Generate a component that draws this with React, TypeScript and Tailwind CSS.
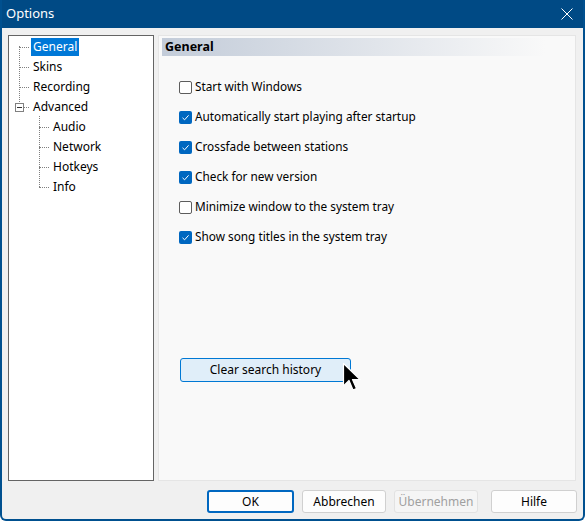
import React from "react";

const font = { fontFamily: '"Noto Sans", "Segoe UI", sans-serif' };

function Check({ checked }: { checked: boolean }) {
  return checked ? (
    <span className="w-[13px] h-[13px] rounded-[2px] bg-[#0067c0] flex items-center justify-center shrink-0">
      <svg width="9" height="9" viewBox="0 0 9 9">
        <path d="M1.5 4.8 L3.6 6.8 L7.6 2.3" fill="none" stroke="white" strokeWidth="1" />
      </svg>
    </span>
  ) : (
    <span className="w-[13px] h-[13px] rounded-[2px] border border-[#5d5d5d] bg-white shrink-0" />
  );
}

const opts: [string, boolean][] = [
  ["Start with Windows", false],
  ["Automatically start playing after startup", true],
  ["Crossfade between stations", true],
  ["Check for new version", true],
  ["Minimize window to the system tray", false],
  ["Show song titles in the system tray", true],
];

function TreeItem({ label, selected }: { label: string; selected?: boolean }) {
  return (
    <div className="h-[20px] flex items-center">
      <span className="w-[10px] border-t border-dotted border-[#808080] mr-[2px]" />
      <span className={selected ? "bg-[#0078d7] text-white px-[2px] h-[18px] flex items-center" : "px-[2px]"}>{label}</span>
    </div>
  );
}

export default function App() {
  return (
    <div className="w-[585px] h-[521px] bg-[#f0f0f0] flex flex-col text-[12px] text-black relative overflow-hidden rounded-b-[6px] border-x-2 border-b-2 border-[#00508f]" style={font}>
      <div className="h-[28px] bg-[#004a85] flex items-center justify-between pl-[4px] pr-[12px] text-white text-[13px] shrink-0 -mx-[2px]">
        <span className="pl-[2px]">Options</span>
        <svg width="12" height="12" viewBox="0 0 12 12">
          <path d="M0.5 0.5 L11.5 11.5 M11.5 0.5 L0.5 11.5" stroke="white" strokeWidth="1" />
        </svg>
      </div>
      <div className="flex gap-[4px] pl-[6px] pr-[7px] pt-[7px] h-[453px] shrink-0">
        <div className="w-[146px] border border-[#646464] bg-white pt-[1px] pl-[10px] relative">
          <div className="absolute left-[10px] top-[10px] h-[60px] border-l border-dotted border-[#808080]" />
          <div className="absolute left-[30px] top-[80px] h-[71px] border-l border-dotted border-[#808080]" />
          <TreeItem label="General" selected />
          <TreeItem label="Skins" />
          <TreeItem label="Recording" />
          <div className="h-[20px] flex items-center -ml-[4px]">
            <span className="w-[9px] h-[9px] border border-[#808080] bg-white flex items-center justify-center relative z-10">
              <span className="w-[5px] border-t border-[#333]" />
            </span>
            <span className="w-[5px] border-t border-dotted border-[#808080] mr-[2px]" />
            <span className="px-[2px]">Advanced</span>
          </div>
          <div className="pl-[20px]">
            <TreeItem label="Audio" />
            <TreeItem label="Network" />
            <TreeItem label="Hotkeys" />
            <TreeItem label="Info" />
          </div>
        </div>
        <div className="flex-1 border border-[#e5e5e5] bg-[#f9f9f9] pt-[2px] px-[3px] flex flex-col">
          <div className="h-[18px] w-[383px] bg-gradient-to-r from-[#c3ccd9] to-[#f9f9f9] flex items-center pl-[3px] font-bold text-[12.5px]">
            General
          </div>
          <div className="flex flex-col pl-[17px] pt-[16px]">
            {opts.map(([l, c]) => (
              <div key={l} className="h-[30px] flex items-center gap-[3px]">
                <Check checked={c} />
                <span className="text-[11.8px]">{l}</span>
              </div>
            ))}
          </div>
          <div className="pl-[18px] pt-[106px]">
            <div className="w-[171px] h-[24px] rounded-[3px] border border-[#0078d4] bg-[#e0eef9] flex items-center justify-center">
              Clear search history
            </div>
          </div>
        </div>
      </div>
      <div className="flex justify-end gap-[8px] pr-[6px] pt-[9px]">
        <div className="w-[87px] h-[23px] rounded-[3px] border-2 border-[#0067c0] bg-[#fdfdfd] flex items-center justify-center">OK</div>
        <div className="w-[84px] h-[23px] rounded-[3px] border border-[#d0d0d0] bg-[#fdfdfd] flex items-center justify-center">Abbrechen</div>
        <div className="w-[84px] h-[23px] rounded-[3px] border border-[#e2e2e2] bg-[#f5f5f5] text-[#a0a0a0] flex items-center justify-center">Übernehmen</div>
        <div className="w-[86px] h-[23px] rounded-[3px] border border-[#d0d0d0] bg-[#fdfdfd] flex items-center justify-center ml-[5px]">Hilfe</div>
      </div>
      <svg className="absolute left-[340px] top-[362px]" width="22" height="32" viewBox="0 0 22 32">
        <path d="M1.5 1.5 L1.5 24 L7 18.5 L11 28 L14.5 26.5 L10.5 17.5 L18 17.5 Z" fill="black" stroke="white" strokeWidth="1.2" strokeLinejoin="round" />
      </svg>
    </div>
  );
}
